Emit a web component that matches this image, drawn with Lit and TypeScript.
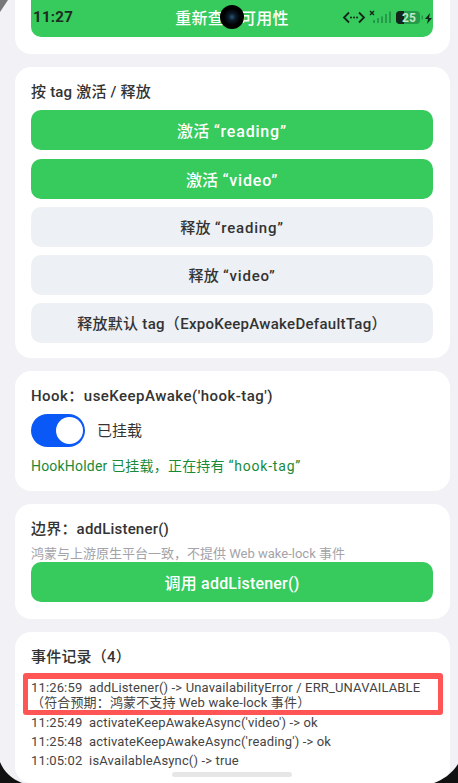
import { LitElement, html, css } from "lit";
import { customElement } from "lit/decorators.js";

@customElement("app-root")
export class AppRoot extends LitElement {
  static styles = css`
    :host {
      display: block;
      width: 458px;
      height: 783px;
      position: relative;
      overflow: hidden;
      background: #f1f1f6;
      font-family: Roboto, "Noto Sans CJK SC", sans-serif;
      color: #333;
    }
    .page { display: flex; flex-direction: column; gap: 13px; padding: 0 8px 0 14.5px; }
    .card { background: #fff; border-radius: 16px; padding: 16px 17px 16px 16.5px; display: flex; flex-direction: column; }
    .card.first { border-radius: 0 0 16px 16px; padding-top: 0; padding-bottom: 17px; }
    .card.tags { padding-bottom: 15.5px; }
    .card.last { height: 151px; box-sizing: border-box; }
    .title { font-size: 15px; font-weight: 500; line-height: 20px; color: #333; letter-spacing: .2px; margin-top: -1px; margin-bottom: 1px; }
    .title.wide { letter-spacing: .47px; }
    .btns { display: flex; flex-direction: column; gap: 8.5px; margin-top: 7px; }
    .btn { height: 40px; flex: none; border-radius: 10px; display: flex; align-items: center; justify-content: center; font-size: 16px; font-weight: 500; letter-spacing: .2px; white-space: pre; }
    .btn.green { background: #37ca5d; color: #fff; }
    .btn.grey { background: #edf0f5; color: #333; height: 39.5px; font-size: 15px; letter-spacing: .3px; }
    .first .btn { height: 37px; border-radius: 0 0 10px 10px; padding-bottom: 3px; box-sizing: border-box; }
    .q { letter-spacing: .8px; }
    .row { display: flex; align-items: center; gap: 12px; margin-top: 7px; }
    .switch { width: 54px; height: 33px; border-radius: 17px; background: #0a59f7; position: relative; flex: none; }
    .thumb { position: absolute; left: 25px; top: 3px; width: 27px; height: 27px; border-radius: 50%; background: #fff; }
    .lbl { font-size: 15px; color: #333; padding-bottom: 3px; }
    .ok { font-size: 14px; color: #188a3a; line-height: 18px; margin-top: 10px; letter-spacing: .2px; }
    .sub { font-size: 13px; color: #a3a3a8; line-height: 16px; margin-top: 6px; }
    .card .sub + .btn { margin-bottom: 1px; }
    .log { margin-top: 11.5px; font-size: 13px; line-height: 15px; color: #444; display: flex; flex-direction: column; gap: 4px; white-space: pre; letter-spacing: .15px; }
    .log .hit { margin-bottom: 1px; }
    .mark { position: absolute; left: 23px; top: 673px; width: 420px; height: 42px; box-sizing: border-box; border: 5.5px solid #ff5555; border-top-width: 6px; border-radius: 3px; }
    .status { position: absolute; left: 33px; right: 18px; top: 7px; height: 20px; display: flex; align-items: center; justify-content: space-between; color: #1c2a20; }
    .time { font-size: 15px; font-weight: 700; letter-spacing: .3px; }
    .cam { position: absolute; left: 220px; top: 5px; width: 24px; height: 24px; border-radius: 50%; background: radial-gradient(circle, #2b5578 0, #0b1a28 22%, #000 50%); }
    .home { position: absolute; left: 172px; top: 772px; width: 120px; height: 5px; border-radius: 3px; background: #e6e6e6; }
    .frame { position: absolute; inset: 0; width: 458px; height: 783px; pointer-events: none; }
  `;

  render() {
    return html`
      <div class="page">
        <div class="card first"><div class="btn green">重新查询可用性</div></div>
        <div class="card tags">
          <div class="title">按 tag 激活 / 释放</div>
          <div class="btns">
            <div class="btn green"><span>激活 <span class="q">“reading”</span></span></div>
            <div class="btn green"><span>激活 <span class="q">“video”</span></span></div>
            <div class="btn grey"><span>释放 <span class="q">“reading”</span></span></div>
            <div class="btn grey"><span>释放 <span class="q">“video”</span></span></div>
            <div class="btn grey">释放默认 tag（ExpoKeepAwakeDefaultTag）</div>
          </div>
        </div>
        <div class="card">
          <div class="title wide">Hook：useKeepAwake('hook-tag')</div>
          <div class="row"><div class="switch"><div class="thumb"></div></div><div class="lbl">已挂载</div></div>
          <div class="ok">HookHolder 已挂载，正在持有 <span class="q">“hook-tag”</span></div>
        </div>
        <div class="card">
          <div class="title">边界：addListener()</div>
          <div class="sub">鸿蒙与上游原生平台一致，不提供 Web wake-lock 事件</div>
          <div class="btn green">调用 addListener()</div>
        </div>
        <div class="card last">
          <div class="title">事件记录（4）</div>
          <div class="log">
            <div class="hit">11:26:59  addListener() -> UnavailabilityError / ERR_UNAVAILABLE<br />（符合预期：鸿蒙不支持 Web wake-lock 事件）</div>
            <div>11:25:49  activateKeepAwakeAsync('video') -> ok</div>
            <div>11:25:48  activateKeepAwakeAsync('reading') -> ok</div>
            <div>11:05:02  isAvailableAsync() -> true</div>
          </div>
        </div>
      </div>
      <div class="mark"></div>
      <div class="status">
        <span class="time">11:27</span>
        <svg width="100" height="20" viewBox="0 0 100 20">
          <path d="M9 5.5 4 10.5l5 5M19 5.5l5 5-5 5" fill="none" stroke="#14251a" stroke-width="1.8"/>
          <circle cx="11" cy="10.5" r="1" fill="#14251a"/><circle cx="14" cy="10.5" r="1" fill="#14251a"/><circle cx="17" cy="10.5" r="1" fill="#14251a"/>
          <path d="M30 4l4 4M34 4l-4 4" stroke="#14251a" stroke-width="1.4"/>
          <g fill="#249a4a"><rect x="33" y="13" width="2" height="3"/><rect x="37" y="11" width="2" height="5"/><rect x="41" y="9.5" width="2" height="6.5"/><rect x="45" y="7" width="2" height="9"/><rect x="49" y="4.5" width="2" height="11.5"/></g>
          <rect x="56" y="4" width="24" height="13" rx="4" fill="#249a4a"/>
          <path d="M60 4h4v13h-4a4 4 0 0 1-4-4V8a4 4 0 0 1 4-4z" fill="#14251a"/>
          <text x="69" y="15" font-size="12" font-weight="700" font-family="Roboto, sans-serif" fill="#bfe8cb" text-anchor="middle">25</text>
          <rect x="81.5" y="8.5" width="1.5" height="4" fill="#249a4a"/>
          <path d="M90 6l-5 6h3l-1 5 5-6h-3z" fill="#14251a"/>
        </svg>
      </div>
      <div class="cam"></div>
      <div class="home"></div>
      <svg class="frame" viewBox="0 0 458 783">
        <path d="M0 0H8L0 12z" fill="#777"/>
        <path d="M0 762C4 772 12 779 22 783H0z" fill="#111"/>
        <path d="M458 764C452 774 442 780 434 783H458z" fill="#111"/>
      </svg>
    `;
  }
}
